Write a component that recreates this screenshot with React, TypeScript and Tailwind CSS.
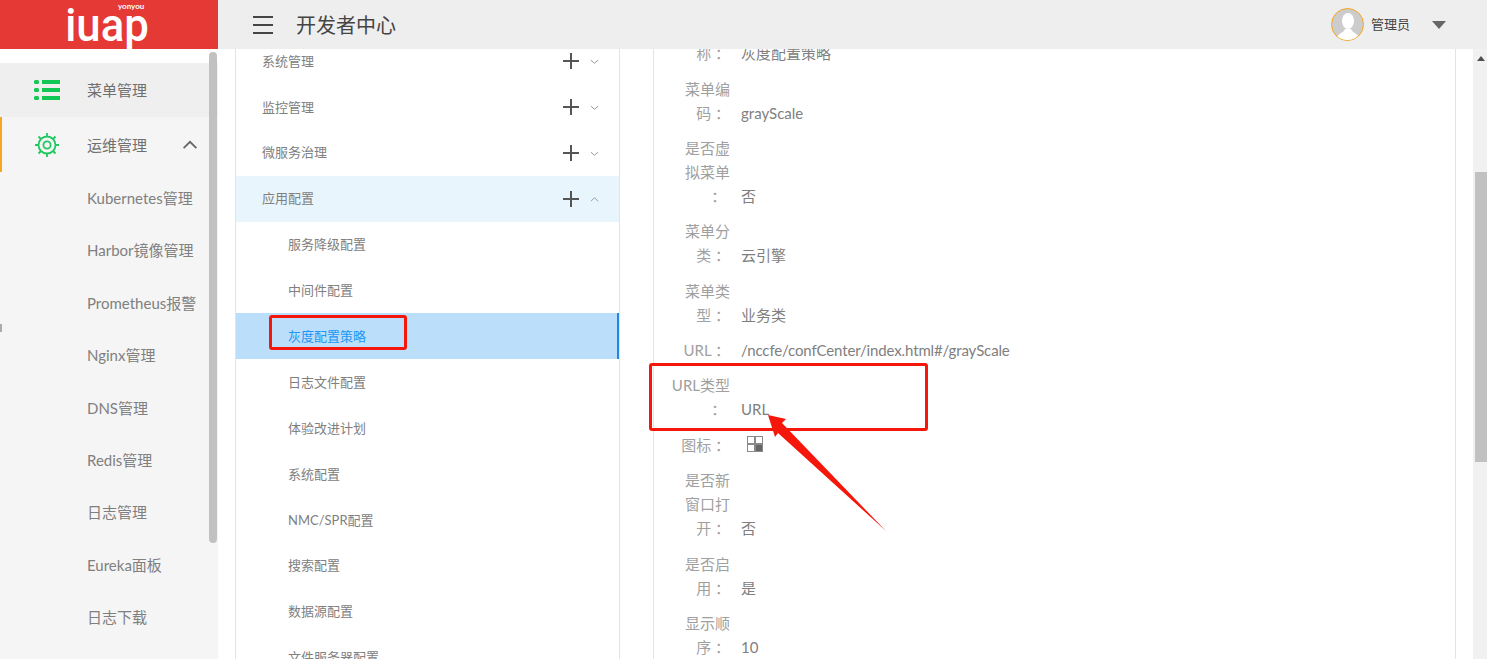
import React from 'react';

const FONT = "font-['Lato','Noto_Sans_CJK_SC',sans-serif]";

const subMenus = ['Kubernetes管理', 'Harbor镜像管理', 'Prometheus报警', 'Nginx管理', 'DNS管理', 'Redis管理', '日志管理', 'Eureka面板', '日志下载'];

const treeRows = [
  { label: '系统管理', top: true },
  { label: '监控管理', top: true },
  { label: '微服务治理', top: true },
  { label: '应用配置', top: true, open: true },
  { label: '服务降级配置' },
  { label: '中间件配置' },
  { label: '灰度配置策略', active: true },
  { label: '日志文件配置' },
  { label: '体验改进计划' },
  { label: '系统配置' },
  { label: 'NMC/SPR配置' },
  { label: '搜索配置' },
  { label: '数据源配置' },
  { label: '文件服务器配置' },
];

const details: { label: string[]; value?: string; icon?: boolean; tight?: boolean }[] = [
  { label: ['菜单编', '码 ：'], value: 'grayScale' },
  { label: ['是否虚', '拟菜单', '： '], value: '否' },
  { label: ['菜单分', '类 ：'], value: '云引擎' },
  { label: ['菜单类', '型 ：'], value: '业务类' },
  { label: ['URL ：'], value: '/nccfe/confCenter/index.html#/grayScale', tight: true },
  { label: ['URL类型', '： '], value: 'URL' },
  { label: ['图标 ：'], icon: true },
  { label: ['是否新', '窗口打', '开 ：'], value: '否' },
  { label: ['是否启', '用 ：'], value: '是' },
  { label: ['显示顺', '序 ：'], value: '10' },
];

const Chevron = ({ up, size = 10, color = '#999' }: { up?: boolean; size?: number; color?: string }) => (
  <svg width={size} height={size} viewBox="0 0 10 10" fill="none" stroke={color} strokeWidth="1.1">
    <path d={up ? 'M1 7 L5 3 L9 7' : 'M1 3.5 L5 7 L9 3.5'} />
  </svg>
);

const Plus = () => (
  <svg width="16" height="16" viewBox="0 0 16 16" stroke="#555" strokeWidth="2">
    <path d="M0 8 H16 M8 0 V16" />
  </svg>
);

const GearIcon = () => (
  <svg width="26" height="26" viewBox="0 0 26 26" fill="none" stroke="#1fc95f" strokeWidth="1.8">
    <circle cx="13" cy="13" r="8.5" />
    <circle cx="13" cy="13" r="3.6" />
    <path d="M13 1 V4.5 M13 21.5 V25 M1 13 H4.5 M21.5 13 H25 M4.5 4.5 L7 7 M19 19 L21.5 21.5 M21.5 4.5 L19 7 M7 19 L4.5 21.5" />
  </svg>
);

const ListIcon = () => (
  <svg width="26" height="20" viewBox="0 0 26 20" fill="#0fc752">
    <rect x="0" y="0" width="5" height="4" rx="1.5" />
    <rect x="0" y="8" width="5" height="4" rx="1.5" />
    <rect x="0" y="16" width="5" height="4" rx="1.5" />
    <rect x="8" y="0" width="18" height="4" />
    <rect x="8" y="8" width="18" height="4" />
    <rect x="8" y="16" width="18" height="4" />
  </svg>
);

const Sidebar = () => (
  <div className="relative w-[218px] shrink-0 overflow-hidden bg-[#f5f5f5]">
    <div className="h-[14px] bg-white" />
    <div className="flex h-[54px] items-center bg-[#efefef] pl-[34px]">
      <ListIcon />
      <span className="ml-[27px] pt-[1px] text-[15px] text-[#707070]">菜单管理</span>
    </div>
    <div className="flex h-[55px] items-center border-l-2 border-[#f5a623] pl-[32px]">
      <GearIcon />
      <span className="ml-[27px] pt-[1px] text-[15px] text-[#707070]">运维管理</span>
      <span className="ml-auto mr-[20px]">
        <Chevron up size={16} color="#666" />
      </span>
    </div>
    {subMenus.map((m) => (
      <div key={m} className="flex h-[52.4px] items-center pl-[87px] text-[15px] text-[#808080]">
        {m}
      </div>
    ))}
    {/* scrollbar */}
    <div className="absolute right-[1px] top-[3px] h-[491px] w-[8px] rounded bg-[#c1c1c1]" />
    <div className="absolute left-0 top-[275px] h-[8px] w-[2px] bg-[#aaaaaa]" />
  </div>
);

const Tree = () => (
  <div className="ml-[17px] h-full w-[385px] shrink-0 overflow-hidden border-x border-[#e4e4e4] bg-white">
    <div className="-mt-[11px]">
      {treeRows.map((r) => (
        <div
          key={r.label}
          className={`flex h-[45.9px] items-center pt-[1px] text-[13px] ${r.top ? 'pl-[26px]' : 'pl-[52px]'} ${
            r.active ? 'border-r-2 border-[#1e88e5] bg-[#bbdefb] text-[#2196f3]' : r.open ? 'bg-[#e8f5fc] text-[#808080]' : 'text-[#808080]'
          }`}
        >
          <span className="flex-1">{r.label}</span>
          {r.top && (
            <span className="mr-[20px] flex items-center gap-[11px]">
              <Plus />
              <Chevron up={r.open} size={9} />
            </span>
          )}
        </div>
      ))}
    </div>
  </div>
);

const Detail = () => (
  <div className="ml-[33px] h-full w-[803px] shrink-0 overflow-hidden border-x border-[#e4e4e4] bg-white">
    <div className="-mt-[8px] flex h-[24px] items-center text-[15px]">
      <div className="w-[76px] whitespace-pre text-right text-[#a0a0a0]">称 ：</div>
      <div className="ml-[11px] text-[#808080]">灰度配置策略</div>
    </div>
    <div className="mt-[11.5px] flex flex-col gap-[11.4px]">
      {details.map((d) => (
        <div key={d.label.join('')} className="flex items-end text-[15px] leading-[24px]">
          <div className="w-[76px] whitespace-pre text-right text-[#a0a0a0]">
            {d.label.map((l) => (
              <div key={l}>{l}</div>
            ))}
          </div>
          <div className={`ml-[11px] text-[#808080] ${d.tight ? 'tracking-[-0.13px]' : ''}`}>
            {d.icon ? (
              <svg className="mb-[5px] ml-[6px]" width="16" height="16" viewBox="0 0 16 16" fill="none" stroke="#8a8a8a">
                <rect x="0.5" y="0.5" width="7" height="7" />
                <rect x="8.5" y="0.5" width="7" height="7" />
                <rect x="0.5" y="8.5" width="7" height="7" />
                <rect x="8.5" y="8.5" width="7" height="7" fill="#666" />
              </svg>
            ) : (
              d.value
            )}
          </div>
        </div>
      ))}
    </div>
  </div>
);

const PageScrollbar = () => (
  <div className="relative ml-[17px] h-full flex-1 bg-[#f1f1f1]">
    <div className="absolute left-[4px] top-[7px] h-0 w-0 border-x-[4px] border-b-[5px] border-x-transparent border-b-[#505050]" />
    <div className="absolute left-[2px] top-[123px] h-[290px] w-[12px] bg-[#c1c1c1]" />
  </div>
);

export default function App() {
  return (
    <div className={`relative flex h-[659px] w-[1487px] flex-col overflow-hidden bg-white ${FONT}`}>
      <header className="flex h-[49px] shrink-0 items-center bg-[#eeeeee]">
        <div className="relative flex h-full w-[218px] shrink-0 items-center justify-center overflow-hidden bg-[#e53935] text-white">
          <span className="origin-center -translate-x-[2px] scale-x-95 font-['Roboto',sans-serif] text-[46px] font-medium leading-none">iuap</span>
          <span className="absolute left-[118px] top-[1px] text-[8px] font-bold leading-[10px]">yonyou</span>
        </div>
        <div className="ml-[35px] flex w-[20px] flex-col gap-[6px]">
          <div className="h-[2px] bg-[#444]" />
          <div className="h-[2px] bg-[#444]" />
          <div className="h-[2px] bg-[#444]" />
        </div>
        <div className="ml-[23px] text-[20px] text-[#444]">开发者中心</div>
        <div className="ml-auto flex items-center pr-[41px]">
          <div className="relative h-[33px] w-[33px] overflow-hidden rounded-full border border-[#f5a623] bg-[#cccccc]">
            <svg width="31" height="31" viewBox="0 0 31 31" fill="#fff">
              <ellipse cx="16" cy="12" rx="6" ry="8" />
              <path d="M4 31 C5 24 12 24 13 20 H19 C20 24 27 24 28 31 Z" />
            </svg>
          </div>
          <span className="ml-[7px] text-[13px] text-[#444]">管理员</span>
          <div className="ml-[22px] h-0 w-0 border-x-[7px] border-t-[8px] border-x-transparent border-t-[#666]" />
        </div>
      </header>
      <div className="flex min-h-0 flex-1">
        <Sidebar />
        <Tree />
        <Detail />
        <PageScrollbar />
      </div>

      {/* red annotations drawn over the screenshot */}
      <div className="absolute left-[269px] top-[315px] h-[35px] w-[138px] rounded-[3px] border-[3px] border-[#f5160c]" />
      <div className="absolute left-[649px] top-[363px] h-[68px] w-[279px] rounded-[3px] border-[3px] border-[#f5160c]" />
      <svg className="absolute left-[760px] top-[410px]" width="130" height="125" viewBox="0 0 130 125">
        <path d="M8 5 L26 9 L22 13 L126 121 L18 23 L15 27 Z" fill="#f5160c" />
      </svg>
    </div>
  );
}
